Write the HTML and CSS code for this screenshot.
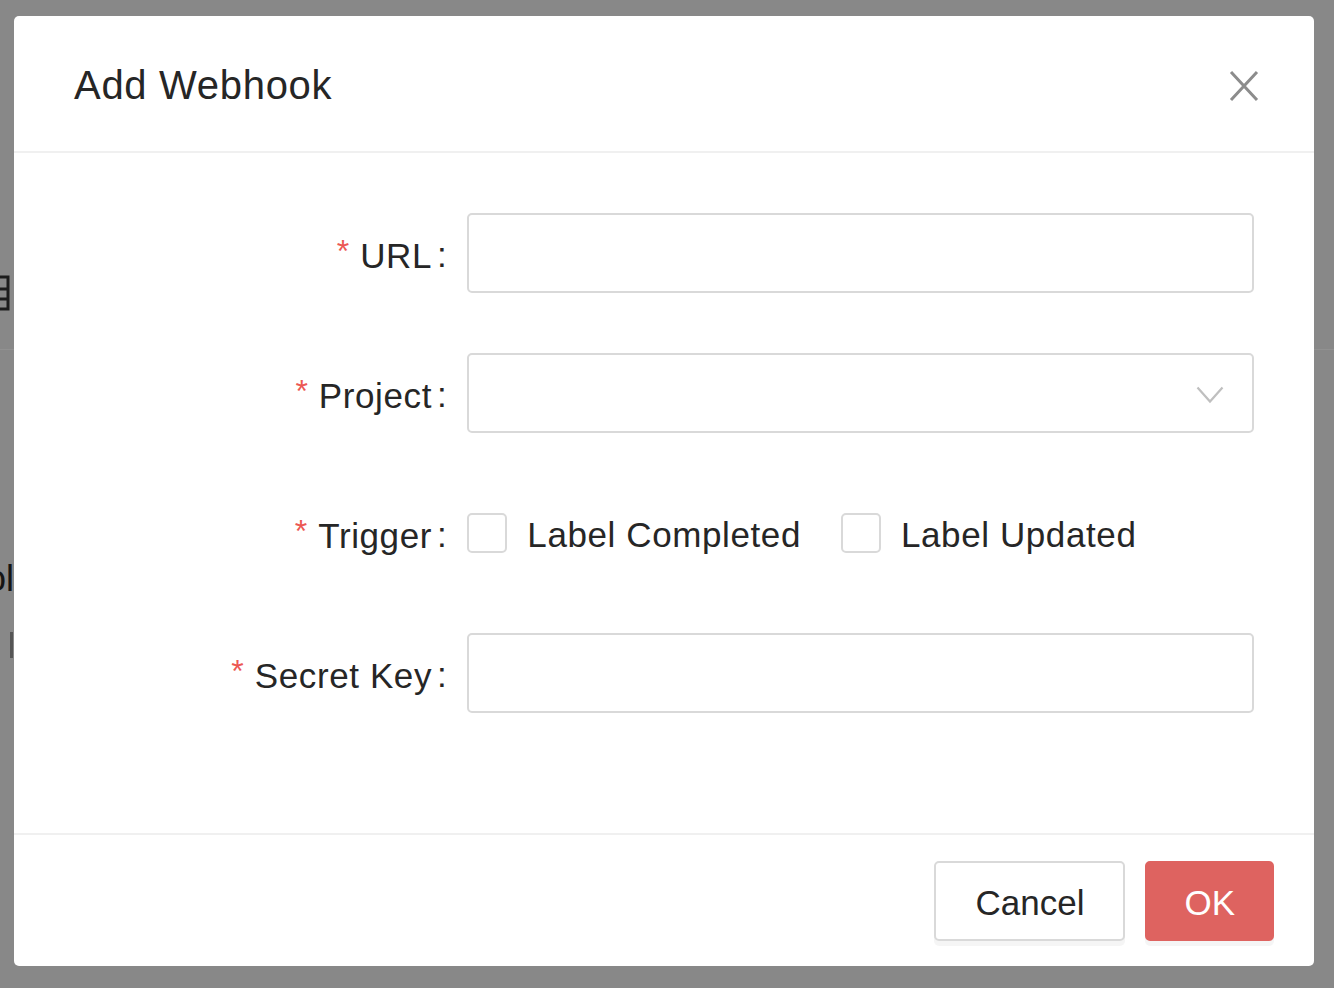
FILE: index.html
```html
<!DOCTYPE html>
<html lang="en">
<head>
<meta charset="utf-8">
<title>Add Webhook</title>
<link rel="stylesheet" href="styles.css">
</head>
<body>
<div class="backdrop">
  <svg class="bg-icon" width="20" height="36" viewBox="0 0 20 36"><rect x="-10" y="2" width="26" height="32" fill="none" stroke="#1c1c1c" stroke-width="3"/><line x1="-10" y1="14" x2="16" y2="14" stroke="#1c1c1c" stroke-width="3"/><line x1="-10" y1="24" x2="16" y2="24" stroke="#1c1c1c" stroke-width="3"/><line x1="3" y1="2" x2="3" y2="34" stroke="#1c1c1c" stroke-width="3"/></svg>
  <div class="bg-line"></div>
  <div class="bg-text">ol</div>
  <div class="bg-bar"></div>
</div>
<div class="wrap">
  <div class="modal">
    <div class="modal-header">
      <div class="modal-title">Add Webhook</div>
      <button class="modal-close" type="button" aria-label="Close">
        <svg width="30" height="32" viewBox="0 0 30 32"><path d="M2 2 L28 30 M28 2 L2 30" stroke="#8c8c8c" stroke-width="3" fill="none"/></svg>
      </button>
    </div>
    <div class="modal-body">
      <div class="form-item">
        <div class="form-label"><span class="req">*</span>URL<span class="colon">:</span></div>
        <div class="form-control"><div class="input"></div></div>
      </div>
      <div class="form-item">
        <div class="form-label"><span class="req">*</span>Project<span class="colon">:</span></div>
        <div class="form-control">
          <div class="input select">
            <svg class="arrow" width="28" height="18" viewBox="0 0 28 18"><polyline points="1.5,1.5 14,15.5 26.5,1.5" fill="none" stroke="#bfbfbf" stroke-width="2.2"/></svg>
          </div>
        </div>
      </div>
      <div class="form-item">
        <div class="form-label"><span class="req">*</span>Trigger<span class="colon">:</span></div>
        <div class="form-control checks">
          <label class="check"><span class="box"></span><span class="check-text">Label Completed</span></label>
          <label class="check"><span class="box"></span><span class="check-text">Label Updated</span></label>
        </div>
      </div>
      <div class="form-item">
        <div class="form-label"><span class="req">*</span>Secret Key<span class="colon">:</span></div>
        <div class="form-control"><div class="input"></div></div>
      </div>
    </div>
    <div class="modal-footer">
      <button class="btn" type="button">Cancel</button>
      <button class="btn btn-primary" type="button">OK</button>
    </div>
  </div>
</div>
</body>
</html>
```
FILE: styles.css
```css
html, body {
  margin: 0;
  padding: 0;
  height: 100%;
}
body {
  background: #888888;
  font-family: "Liberation Sans", Arial, sans-serif;
  color: #262626;
  overflow: hidden;
  position: relative;
}
.backdrop {
  position: absolute;
  inset: 0;
}
.bg-icon {
  position: absolute;
  left: -8px;
  top: 275px;
}
.bg-line {
  position: absolute;
  left: 0;
  right: 0;
  top: 349px;
  height: 1px;
  background: #919191;
}
.bg-text {
  position: absolute;
  left: -14px;
  top: 558px;
  font-size: 36px;
  line-height: 42px;
  color: #151515;
}
.bg-bar {
  position: absolute;
  left: 10px;
  top: 632px;
  width: 3px;
  height: 26px;
  background: #555;
}
.wrap {
  position: relative;
  padding: 16px 0 0 14px;
}
.modal {
  width: 1300px;
  background: #fff;
  border-radius: 5px;
  position: relative;
  z-index: 1;
}
.modal-header {
  padding: 42px 60px 38px;
  border-bottom: 2px solid #f0f0f0;
}
.modal-title {
  font-size: 40px;
  line-height: 55px;
  letter-spacing: 0.7px;
  color: #262626;
}
.modal-close {
  position: absolute;
  top: 0;
  right: 0;
  width: 140px;
  height: 140px;
  border: 0;
  background: transparent;
  padding: 0;
  display: flex;
  align-items: center;
  justify-content: center;
}
.modal-body {
  padding: 60px;
}
.form-item {
  display: flex;
  margin-bottom: 60px;
}
.form-label {
  flex: 0 0 33.3333%;
  text-align: right;
  box-sizing: border-box;
  height: 80px;
  padding-top: 3px;
  line-height: 80px;
  font-size: 35px;
  letter-spacing: 0.6px;
  white-space: nowrap;
  color: #262626;
}
.req {
  color: #ec5853;
  margin-right: 11px;
  font-size: 32px;
  position: relative;
  top: -6px;
  letter-spacing: 0;
}
.colon {
  margin: 0 20px 0 5px;
  position: relative;
  top: -1px;
}
.form-control {
  flex: 1;
  min-width: 0;
}
.input {
  box-sizing: border-box;
  height: 80px;
  border: 2px solid #d9d9d9;
  border-radius: 5px;
  background: #fff;
}
.select {
  display: flex;
  align-items: center;
  justify-content: flex-end;
  padding-right: 28px;
}
.arrow {
  display: block;
  margin-top: 4px;
}
.checks {
  display: flex;
  align-items: center;
  height: 80px;
}
.check {
  display: flex;
  align-items: center;
  margin-right: 20px;
}
.box {
  box-sizing: border-box;
  width: 40px;
  height: 40px;
  border: 2px solid #d9d9d9;
  border-radius: 5px;
  background: #fff;
}
.check-text {
  padding: 3px 20px 0;
  font-size: 35px;
  line-height: 55px;
  letter-spacing: 0.6px;
}
.modal-footer {
  border-top: 2px solid #f0f0f0;
  padding: 26px 40px 25px;
  display: flex;
  justify-content: flex-end;
  gap: 20px;
}
.btn {
  box-sizing: border-box;
  height: 80px;
  padding: 4px 39px 0;
  font-family: "Liberation Sans", Arial, sans-serif;
  font-size: 35px;
  color: #262626;
  background: #fff;
  border: 2px solid #d9d9d9;
  border-radius: 5px;
  box-shadow: 0 5px 0 rgba(0, 0, 0, 0.04);
}
.btn-primary {
  padding: 4px 37px 0;
  background: #de6360;
  border-color: #de6360;
  color: #fff;
}
```
